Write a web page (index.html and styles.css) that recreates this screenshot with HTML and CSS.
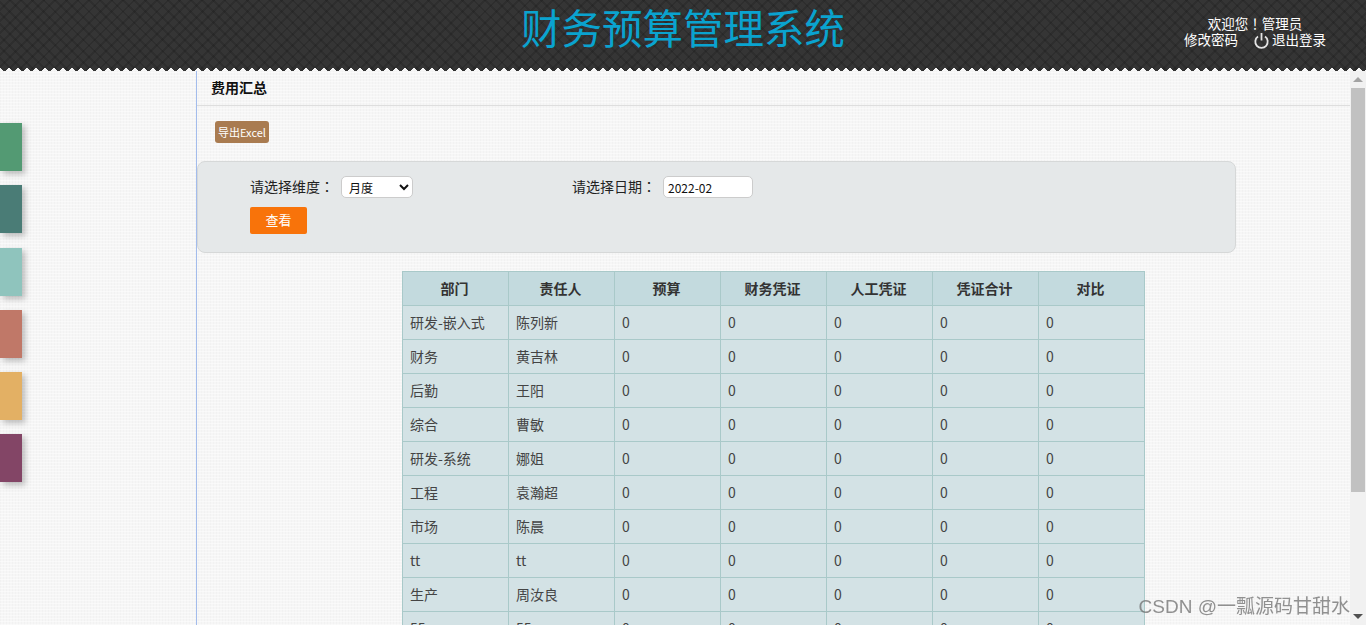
FILE: index.html
```html
<!DOCTYPE html>
<html lang="zh-CN">
<head>
  <meta charset="UTF-8" />
  <title>财务预算管理系统</title>
  <link rel="stylesheet" href="styles.css">
</head>
<body>
  <header class="top">
    <div></div>
    <h1 class="brand">财务预算管理系统</h1>
    <div class="user">
      <div class="user-hello">欢迎您<span class="mark" lang="zh-TW">！</span>管理员</div>
      <div class="user-links">
        <a>修改密码</a>
        <a class="logout">
          <svg width="15" height="16" viewBox="0 0 15 16" fill="none" stroke="#e4e4e4" stroke-width="1.8">
            <path d="M4 3.6a6.2 6.2 0 1 0 7 0" />
            <path d="M7.5 0v7.5" />
          </svg>
          退出登录
        </a>
      </div>
    </div>
  </header>

  <div class="layout">
    <nav class="side">
      <div class="tile t1"></div>
      <div class="tile t2"></div>
      <div class="tile t3"></div>
      <div class="tile t4"></div>
      <div class="tile t5"></div>
      <div class="tile t6"></div>
    </nav>

    <main class="main">
      <div class="page-title">费用汇总</div>
      <div class="tools">
        <button class="btn-excel">导出Excel</button>
      </div>

      <div class="filter">
        <div class="filter-row">
          <label class="field field-a">请选择维度<span class="mark" lang="zh-TW">：</span>
            <select>
              <option>月度</option>
              <option>年度</option>
            </select>
          </label>
          <label class="field">请选择日期<span class="mark" lang="zh-TW">：</span>
            <input type="text" value="2022-02" />
          </label>
        </div>
        <button class="btn-view">查看</button>
      </div>

      <table class="grid">
        <thead>
          <tr><th>部门</th><th>责任人</th><th>预算</th><th>财务凭证</th><th>人工凭证</th><th>凭证合计</th><th>对比</th></tr>
        </thead>
        <tbody>
          <tr><td>研发-嵌入式</td><td>陈列新</td><td>0</td><td>0</td><td>0</td><td>0</td><td>0</td></tr>
          <tr><td>财务</td><td>黄吉林</td><td>0</td><td>0</td><td>0</td><td>0</td><td>0</td></tr>
          <tr><td>后勤</td><td>王阳</td><td>0</td><td>0</td><td>0</td><td>0</td><td>0</td></tr>
          <tr><td>综合</td><td>曹敏</td><td>0</td><td>0</td><td>0</td><td>0</td><td>0</td></tr>
          <tr><td>研发-系统</td><td>娜姐</td><td>0</td><td>0</td><td>0</td><td>0</td><td>0</td></tr>
          <tr><td>工程</td><td>袁瀚超</td><td>0</td><td>0</td><td>0</td><td>0</td><td>0</td></tr>
          <tr><td>市场</td><td>陈晨</td><td>0</td><td>0</td><td>0</td><td>0</td><td>0</td></tr>
          <tr><td>tt</td><td>tt</td><td>0</td><td>0</td><td>0</td><td>0</td><td>0</td></tr>
          <tr><td>生产</td><td>周汝良</td><td>0</td><td>0</td><td>0</td><td>0</td><td>0</td></tr>
          <tr><td>55</td><td>55</td><td>0</td><td>0</td><td>0</td><td>0</td><td>0</td></tr>
        </tbody>
      </table>
    </main>

    <div class="scrollbar">
      <div class="arrow arrow-up"></div>
      <div class="thumb"></div>
      <div class="arrow arrow-down"></div>
    </div>
  </div>

  <div class="watermark">CSDN @一瓢源码甘甜水</div>
</body>
</html>
```

FILE: styles.css
```css
html,
body {
  height: 100%;
  margin: 0;
  overflow: hidden;
}

body {
  display: flex;
  flex-direction: column;
  font-family: "Noto Sans CJK SC", "Liberation Sans", sans-serif;
  font-size: 14px;
  color: #222;
  background-color: #f6f6f6;
  background-image:
    repeating-linear-gradient(0deg, rgba(255, 255, 255, 0.45) 0 1px, transparent 1px 3px),
    repeating-linear-gradient(90deg, rgba(232, 232, 232, 0.3) 0 1px, transparent 1px 3px);
}

/* 全角标点居中 */
.mark {
  font-family: "Noto Sans CJK TC", sans-serif;
}

/* 顶部 */
.top {
  position: relative;
  flex: none;
  height: 71px;
  display: grid;
  grid-template-columns: 1fr auto 1fr;
  background-color: #353535;
  background-image:
    repeating-linear-gradient(45deg, rgba(0, 0, 0, 0.14) 0 2px, transparent 2px 8px),
    repeating-linear-gradient(-45deg, rgba(0, 0, 0, 0.14) 0 2px, transparent 2px 8px);
}

.top::after {
  content: "";
  position: absolute;
  left: 0;
  right: 0;
  bottom: 0;
  height: 4px;
  background-image:
    linear-gradient(135deg, transparent 50%, #f6f6f6 50%),
    linear-gradient(225deg, transparent 50%, #f6f6f6 50%);
  background-size: 9px 9px;
}

.brand {
  margin: 6px 0 0;
  font-family: "Liberation Sans", "Noto Sans CJK SC", sans-serif;
  font-size: 40.5px;
  line-height: 48px;
  font-weight: 400;
  color: #0aa3cf;
}

.user {
  justify-self: end;
  width: 142px;
  padding: 14px 40px 0 0;
  color: #fff;
  font-family: "Liberation Sans", "Noto Sans CJK SC", sans-serif;
  font-size: 13.5px;
  line-height: 18px;
  text-align: center;
}

.user-hello {
  height: 18px;
}

.user-links {
  display: flex;
  justify-content: space-between;
}

.logout {
  display: flex;
  align-items: center;
  gap: 3px;
}

/* 主体 */
.layout {
  flex: 1;
  min-height: 0;
  display: flex;
}

.side {
  flex: none;
  width: 196px;
  display: flex;
  flex-direction: column;
  gap: 14.25px;
  padding-top: 52px;
  border-right: 1px solid #a3bcec;
}

.tile {
  width: 22px;
  height: 48px;
  box-shadow: 3px 3px 6px rgba(0, 0, 0, 0.25);
}

.t1 { background: #539a73; }
.t2 { background: #4a7c76; }
.t3 { background: #8fc4bd; }
.t4 { background: #c07868; }
.t5 { background: #e3b064; }
.t6 { background: #834566; }

.main {
  flex: 1;
  min-width: 0;
  overflow: hidden;
}

/* 滚动条 */
.scrollbar {
  flex: none;
  width: 16px;
  display: flex;
  flex-direction: column;
  background: #f1f1f1;
}

.arrow {
  position: relative;
  flex: none;
  height: 17px;
}

.arrow::before {
  content: "";
  position: absolute;
  left: 3px;
  top: 6px;
  border-left: 5px solid transparent;
  border-right: 5px solid transparent;
}

.arrow-up::before {
  border-bottom: 5px solid #a3a3a3;
}

.arrow-down {
  margin-top: auto;
}

.arrow-down::before {
  border-top: 5px solid #505050;
}

.thumb {
  flex: none;
  height: 404px;
  margin: 0 1px;
  background: #c1c1c1;
}

.page-title {
  height: 34px;
  line-height: 32px;
  padding-left: 14px;
  font-weight: bold;
  color: #111;
  border-bottom: 1px solid #dedede;
}

.tools {
  padding: 15px 18px 18px;
}

.btn-excel {
  display: block;
  width: 54px;
  height: 22px;
  padding: 0;
  border: none;
  border-radius: 3px;
  background: #a97b50;
  color: #fff;
  font: 11px "Noto Sans CJK SC", "Liberation Sans", sans-serif;
}

.filter {
  box-sizing: border-box;
  width: 1039px;
  height: 92px;
  padding: 14px 52px 0;
  background: #e5e8e9;
  border: 1px solid #d6d8d8;
  border-radius: 8px;
}

.filter-row {
  display: flex;
  height: 22px;
}

.field {
  display: flex;
  align-items: flex-start;
  line-height: 20px;
  white-space: nowrap;
}

.field-a {
  width: 322px;
}

.field select,
.field input {
  box-sizing: border-box;
  height: 22px;
  margin-left: 7px;
  background: #fff;
  border: 1px solid #ccc;
  border-radius: 5px;
  color: #111;
  font: 12px "Noto Sans CJK SC", "Liberation Sans", sans-serif;
}

.field select {
  width: 72px;
  padding: 0 3px;
}

.field input {
  width: 90px;
  padding: 0 4px;
}

.btn-view {
  display: block;
  width: 57px;
  height: 27px;
  margin-top: 9px;
  padding: 0 0 2px;
  border: none;
  border-radius: 2px;
  background: #f8730a;
  color: #fff;
  font: 13px "Noto Sans CJK SC", "Liberation Sans", sans-serif;
}

.grid {
  width: 743px;
  margin: 18px auto 0;
  border-collapse: collapse;
  table-layout: fixed;
  color: #444;
}

.grid th,
.grid td {
  height: 31px;
  padding: 0 7px 2px;
  border: 1px solid #a9c9c9;
  background: #d3e2e5;
  text-align: left;
}

.grid th {
  padding: 0 8px 2px 6px;
  background: #c3dade;
  text-align: center;
  color: #333;
}

.watermark {
  position: fixed;
  right: 16px;
  bottom: 7px;
  font-family: "Liberation Sans", "Noto Sans CJK SC", sans-serif;
  font-size: 19px;
  color: rgba(110, 110, 110, 0.75);
  white-space: nowrap;
}
```
